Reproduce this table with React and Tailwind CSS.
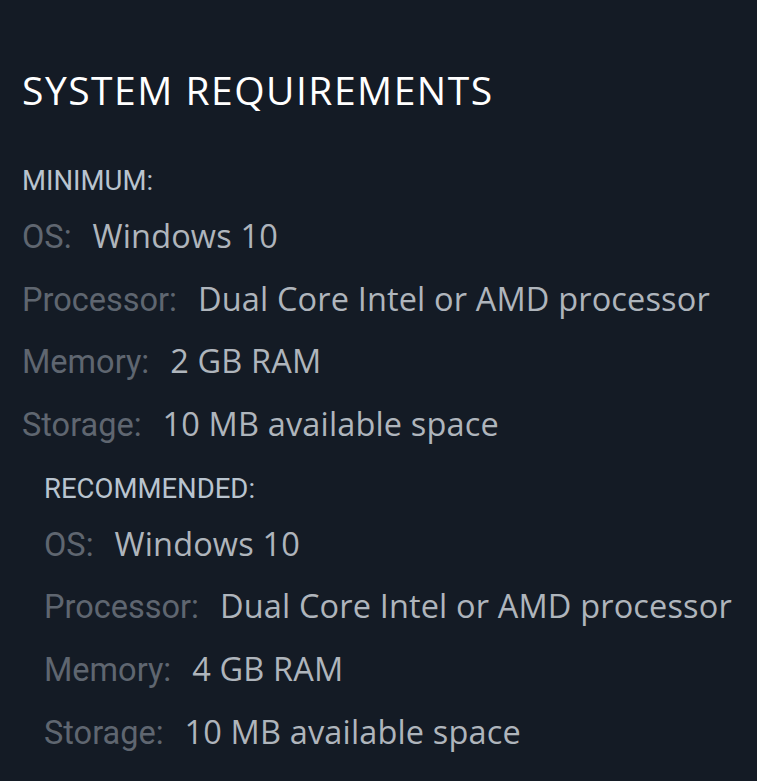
import React from "react";

const minimum = [
  { label: "OS:", value: "Windows 10" },
  { label: "Processor:", value: "Dual Core Intel or AMD processor" },
  { label: "Memory:", value: "2 GB RAM" },
  { label: "Storage:", value: "10 MB available space" },
];

const recommended = [
  { label: "OS:", value: "Windows 10" },
  { label: "Processor:", value: "Dual Core Intel or AMD processor" },
  { label: "Memory:", value: "4 GB RAM" },
  { label: "Storage:", value: "10 MB available space" },
];

const ReqList = ({ title, items }) => (
  <div>
    <div className="text-[27.5px] leading-[38px] text-[#b9c4cf] font-['Roboto',sans-serif] uppercase">
      {title}
    </div>
    <ul className="mt-[5px]">
      {items.map((item) => (
        <li key={item.label} className="flex items-baseline h-[62.67px] leading-[62.67px] whitespace-nowrap">
          <span className="text-[32.5px] text-[#5f6670] font-['Roboto',sans-serif]">
            {item.label}
          </span>
          <span className="ml-[21px] text-[32.5px] tracking-[0.15px] text-[#afb5bc] font-['Open_Sans',sans-serif]">
            {item.value}
          </span>
        </li>
      ))}
    </ul>
  </div>
);

export default function App() {
  return (
    <div className="min-h-screen w-full bg-[#141b25] px-[22px] pt-[64px] overflow-hidden">
      <h2 className="text-[39px] leading-[52px] text-white font-['Open_Sans',sans-serif] tracking-[1.5px] uppercase">
        System Requirements
      </h2>
      <div className="mt-[46px]">
        <ReqList title="Minimum:" items={minimum} />
      </div>
      <div className="mt-[14px] pl-[22px]">
        <ReqList title="Recommended:" items={recommended} />
      </div>
    </div>
  );
}
